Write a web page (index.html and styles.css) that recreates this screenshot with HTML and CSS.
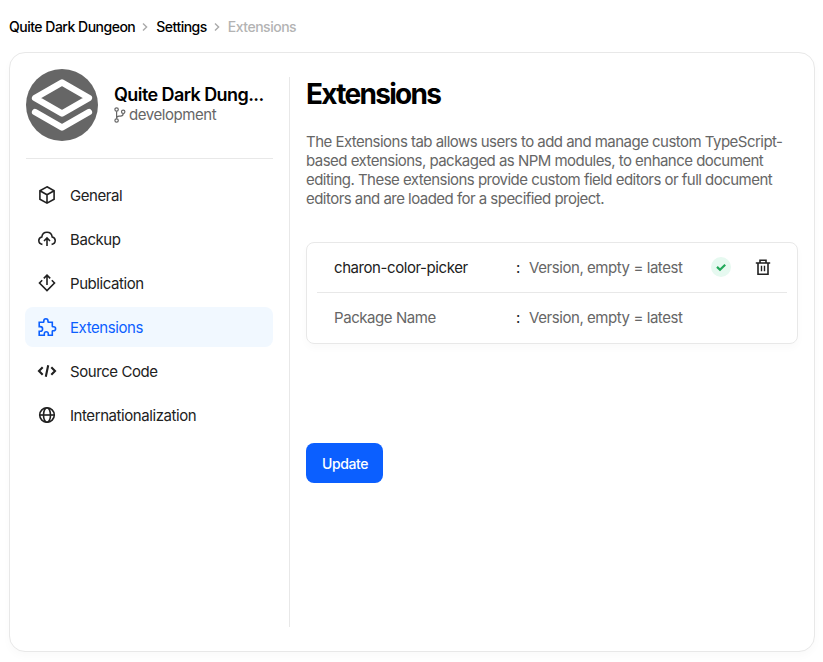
FILE: index.html
```html
<!DOCTYPE html>
<html lang="en">
<head>
<meta charset="utf-8">
<title>Extensions</title>
<link rel="stylesheet" href="styles.css">
</head>
<body>
<nav class="crumbs">
  <span>Quite Dark Dungeon</span>
  <svg class="chevron" viewBox="0 0 6 8"><path d="M1 .6 4.600 4 1 7.400"/></svg>
  <span>Settings</span>
  <svg class="chevron" viewBox="0 0 6 8"><path d="M1 .6 4.600 4 1 7.400"/></svg>
  <span class="crumb-current">Extensions</span>
</nav>
<div class="card">
  <aside class="sidebar">
    <header class="project">
      <svg class="avatar" viewBox="0 0 72 72"><circle cx="36" cy="36" r="36" fill="#666"/><g fill="none" stroke="#fff" stroke-width="6.2" stroke-linecap="round" stroke-linejoin="round"><path d="M9 29 36 13.5 63 29 36 44.5Z"/><path d="M9 43 36 58.5 63 43"/></g></svg>
      <div class="project-text">
        <div class="project-name">Quite Dark Dung...</div>
        <div class="branch"><svg viewBox="0 0 12 16"><circle cx="2.6" cy="2.5" r="1.7"/><circle cx="2.6" cy="13.5" r="1.7"/><circle cx="9.2" cy="4.8" r="1.7"/><path d="M2.6 4.2v7.6M9.2 6.5c0 2-.8 2.7-2.8 2.7H5c-1.6 0-2.4.8-2.4 2.4"/></svg><span>development</span></div>
      </div>
    </header>
    <ul class="menu">
      <li><svg viewBox="0 0 20 20"><path d="m10 1.8 7.1 4v8.4l-7.1 4-7.1-4V5.8ZM2.9 5.8l7.1 4 7.1-4M10 9.8v8.4"/></svg><span>General</span></li>
      <li><svg viewBox="0 0 20 20"><path d="M5.4 15.4C3.2 15.1 1.8 13.6 1.8 11.6c0-1.8 1.2-3.2 3-3.6C5.2 5.2 7.3 3.3 10 3.3s4.800 1.900 5.200 4.700c1.800.4 3 1.800 3 3.600 0 2-1.400 3.500-3.600 3.800M10 16.900V9.200M7 12l3-3 3 3"/></svg><span>Backup</span></li>
      <li><svg viewBox="0 0 20 20"><path d="M10 12V2.3M6.8 5.4 10 2.2l3.2 3.2M5.2 7.3 2.5 10l7.5 7.5 7.5-7.5-2.7-2.7"/></svg><span>Publication</span></li>
      <li class="active"><svg viewBox="0 0 20 20"><path d="M2.2 5.3h4.1c.3 0 .5-.3.5-.6V4c0-1.4.8-2.3 2.1-2.3S11 2.6 11 4v.7c0 .3.2.6.5.6h3.8v3.9c0 .3.3.5.6.5h.6c1.3 0 2.1.8 2.1 2s-.8 2-2.1 2h-.6c-.3 0-.6.2-.6.5v4h-4v-1.4c0-1.3-.8-2.1-2-2.1s-2 .8-2 2.1v1.4H2.2v-4h1.1c1.4 0 2.3-.9 2.3-2.3S4.7 9.600 3.300 9.600H2.200Z"/></svg><span>Extensions</span></li>
      <li><svg viewBox="0 0 20 20"><g stroke-width="2.1"><path d="M5.700 6.300 2 10l3.700 3.700M14.300 6.300 18 10l-3.700 3.700M11.200 4.200 8.800 15.800"/></g></svg><span>Source Code</span></li>
      <li><svg viewBox="0 0 20 20"><circle cx="10" cy="10" r="7.300"/><ellipse cx="10" cy="10" rx="3.500" ry="7.300"/><path d="M2.700 10h14.600"/></svg><span>Internationalization</span></li>
    </ul>
  </aside>
  <main class="content">
    <h1>Extensions</h1>
    <p>The Extensions tab allows users to add and manage custom TypeScript-<br>based extensions, packaged as NPM modules, to enhance document<br>editing. These extensions provide custom field editors or full document<br>editors and are loaded for a specified project.</p>
    <section class="packages">
      <div class="row">
        <span class="package">charon-color-picker</span><span class="colon">:</span><span class="version">Version, empty = latest</span>
        <span class="status"><svg viewBox="0 0 20 20"><path d="m6 9.900 3 2.900 5.200-5.100"/></svg></span>
        <svg class="trash" viewBox="0 0 16 18"><path d="M.8 5h14.400M3 5v11.200h10V5M5 4.800V2.200h6v2.600"/><path class="bars" d="M6.500 7.800v5.400M9.500 7.800v5.400"/></svg>
      </div>
      <div class="row">
        <span class="package placeholder">Package Name</span><span class="colon">:</span><span class="version">Version, empty = latest</span>
      </div>
    </section>
    <button type="button">Update</button>
  </main>
</div>
</body>
</html>
```
FILE: styles.css
```css
* { box-sizing: border-box; }
body {
  margin: 0;
  padding: 16px 8px 10px 9px;
  height: 662px;
  overflow: hidden;
  background: #fff;
  color: #212121;
  font-family: Inter, "Liberation Sans", sans-serif;
  font-size: 15px;
  letter-spacing: -0.43px;
}
.crumbs {
  display: flex;
  align-items: center;
  height: 20px;
  font-size: 14px;
  font-weight: 500;
  letter-spacing: -0.5px;
  color: #000;
  white-space: nowrap;
}
.chevron { width: 6px; height: 8px; margin: 2px 8px 0 7px; fill: none; stroke: #aaa; stroke-width: 1.4; }
.crumb-current { color: #b3b3b3; }
.card {
  display: flex;
  height: 600px;
  margin-top: 16px;
  border: 1px solid #e8e8e8;
  border-radius: 16px;
  background: #fff;
  box-shadow: 0 4px 8px rgba(0, 0, 0, .025);
}
.sidebar { width: 279px; padding: 16px 16px 0 15px; flex: none; }
.project {
  display: flex;
  height: 90px;
  margin-left: 1px;
  border-bottom: 1px solid #e8e8e8;
}
.avatar { width: 72px; height: 72px; flex: none; }
.project-text { margin: 15px 0 0 16px; }
.project-name {
  white-space: nowrap;
  font-size: 18px;
  line-height: 22px;
  font-weight: 600;
  letter-spacing: -0.58px;
  color: #000;
}
.branch { display: flex; align-items: center; gap: 3px; height: 17px; color: #666; }
.branch svg { width: 12px; height: 16px; fill: none; stroke: #666; stroke-width: 1.2; }
.menu { display: flex; flex-direction: column; gap: 4px; margin: 16px 0 0; padding: 0; list-style: none; }
.menu li { display: flex; align-items: center; height: 40px; padding-left: 12px; border-radius: 8px; }
.menu svg { width: 20px; height: 20px; margin-right: 13px; fill: none; stroke: currentColor; stroke-width: 1.6; }
.menu .active { background: #f1f8ff; color: #0b5fff; }
.content {
  flex: 1;
  margin: 24px 0;
  padding-left: 16px;
  border-left: 1px solid #e8e8e8;
}
h1 { margin: 0; font-size: 28px; line-height: 35px; font-weight: 700; letter-spacing: -1.7px; color: #000; }
p { margin: 20px 0 0; line-height: 19px; letter-spacing: -0.53px; color: #666; white-space: nowrap; }
.packages {
  width: 492px;
  height: 102px;
  margin-top: 34px;
  padding: 0 10px;
  border: 1px solid #e8e8e8;
  border-radius: 8px;
  box-shadow: 0 4px 8px rgba(0, 0, 0, .025);
}
.row { display: flex; align-items: center; height: 48px; padding-left: 17px; white-space: nowrap; }
.row:first-child { height: 50px; border-bottom: 1px solid #e8e8e8; }
.package { width: 182px; }
.colon { width: 13px; }
.version { width: 182px; color: #666; }
.placeholder { color: #666; }
.status { width: 20px; height: 20px; margin-bottom: 1px; border-radius: 50%; background: #e6f9f0; }
.status svg { display: block; fill: none; stroke: #22a95a; stroke-width: 2.2; }
.trash { width: 16px; height: 18px; margin: 0 0 1px 24px; fill: none; stroke: #212121; stroke-width: 1.6; }
.trash .bars { stroke-width: 1.4; }
button {
  display: block;
  width: 77px;
  height: 40px;
  margin-top: 99px;
  padding: 2px 0 0 1px;
  border: 0;
  border-radius: 8px;
  background: #0b5fff;
  color: #fff;
  font: 500 14px/20px Inter, sans-serif;
  letter-spacing: -0.4px;
}
```
